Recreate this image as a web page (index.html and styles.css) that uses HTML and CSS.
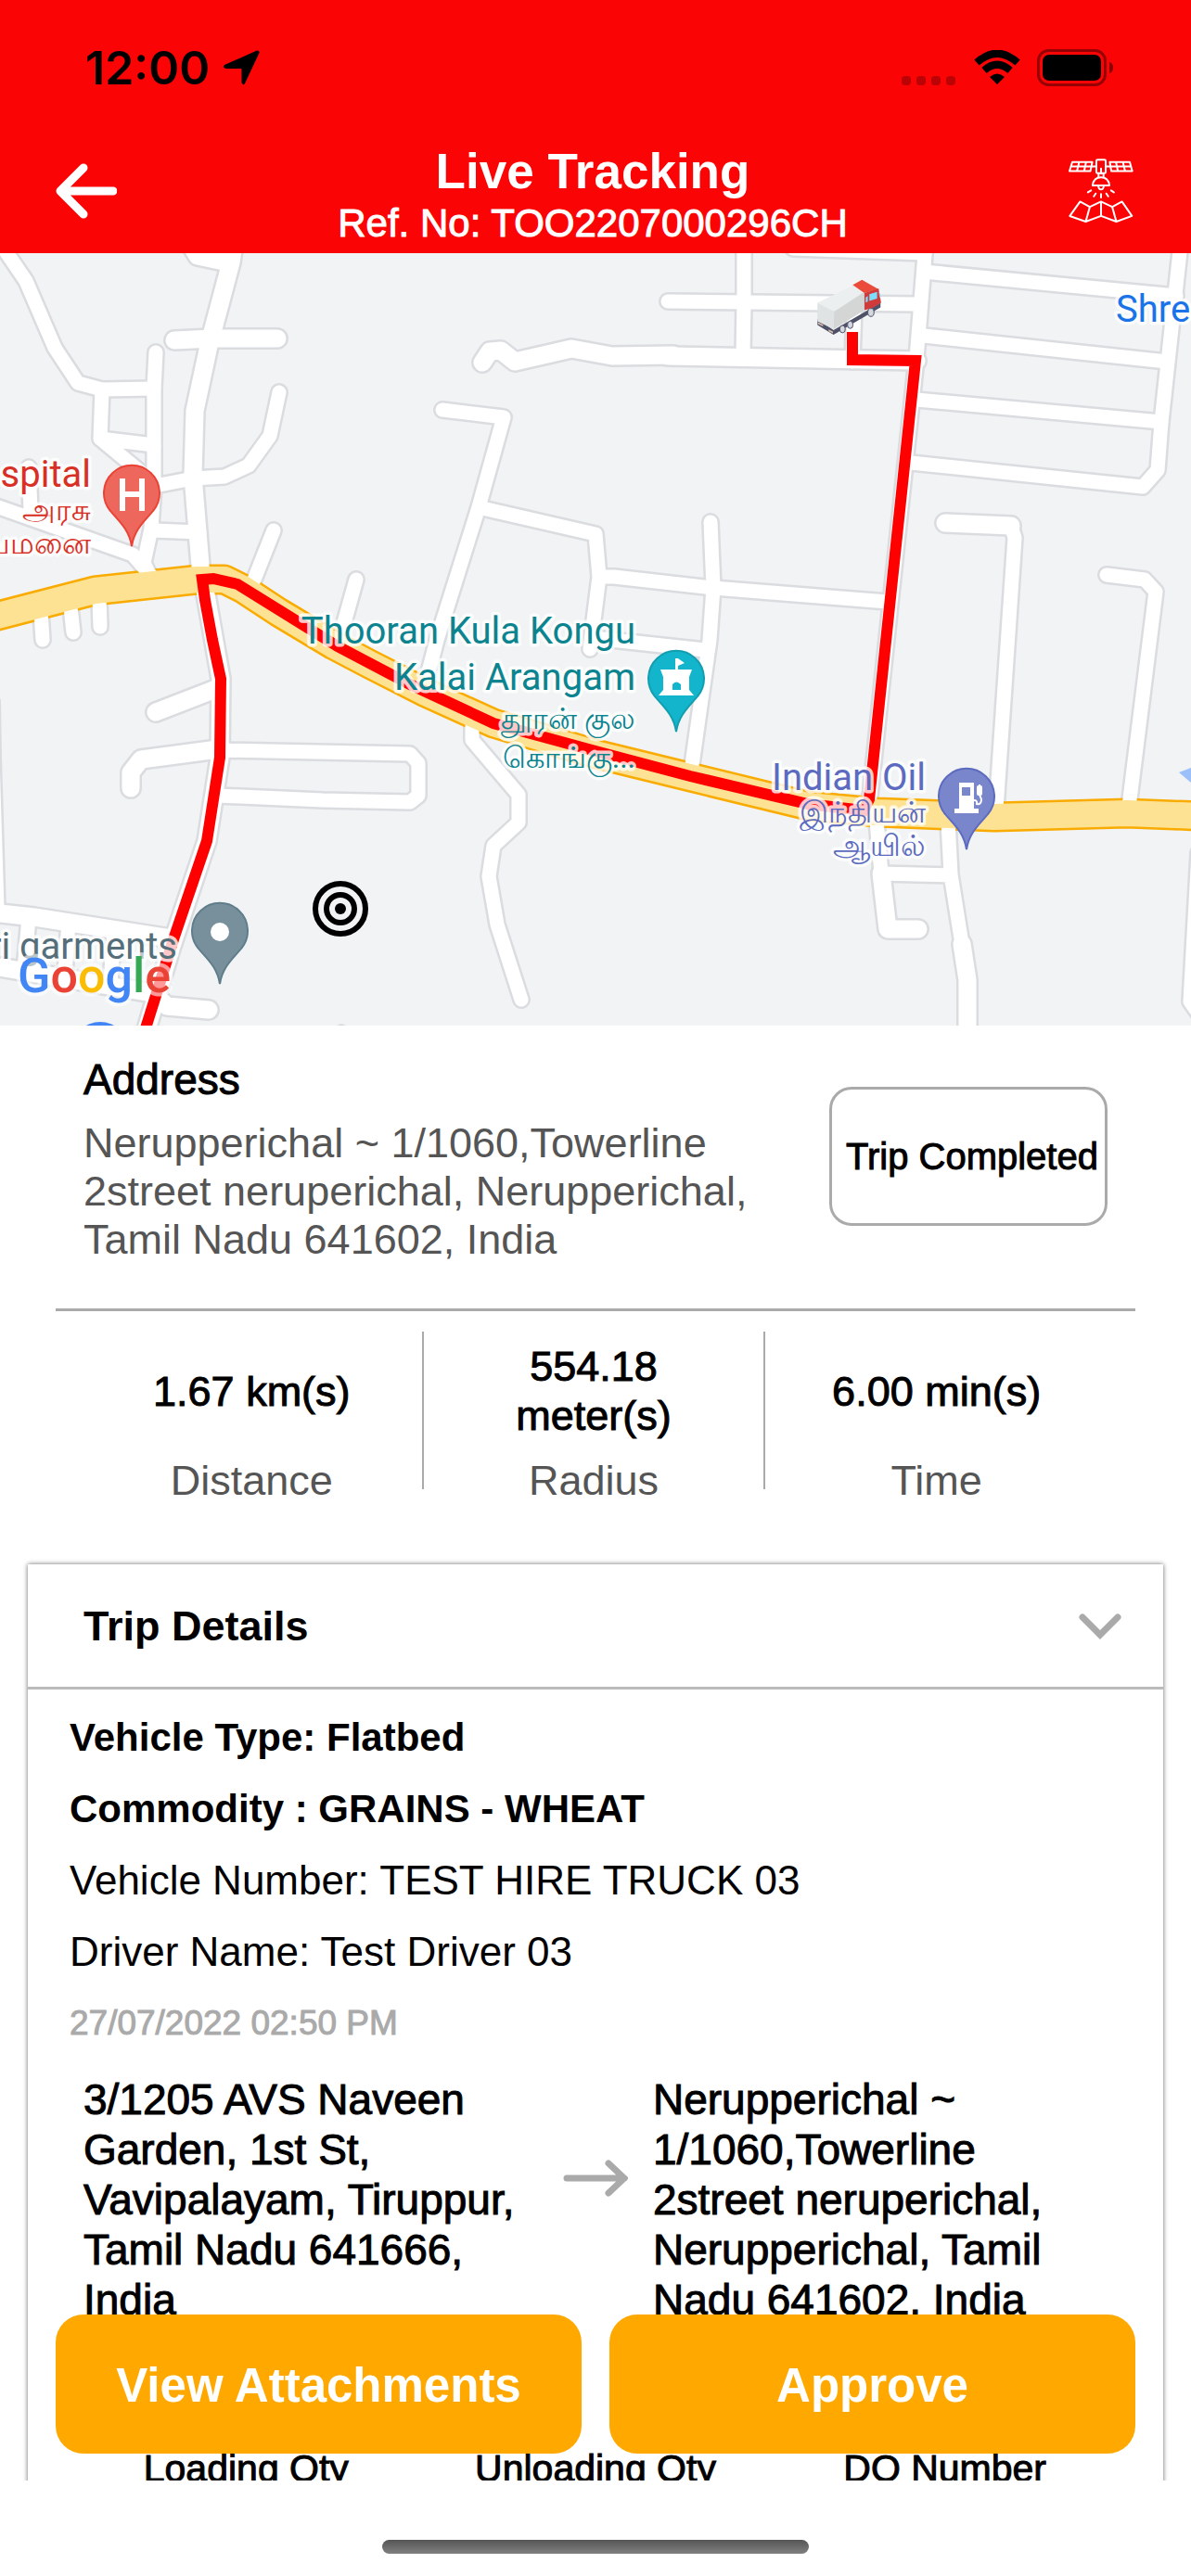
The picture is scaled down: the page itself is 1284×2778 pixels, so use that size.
FILE: index.html
```html
<!DOCTYPE html>
<html lang="en">
<head>
    <meta charset="UTF-8">
    <meta name="viewport" content="width=device-width, initial-scale=1.0">
    <title>Live Tracking</title>
    <link rel="stylesheet" href="styles.css">
</head>
<body>
<div class="app">
    <header class="header">
        <div class="status-bar">
            <div class="status-left">
                <span class="clock">12:00</span>
                <svg class="location" viewBox="0 0 40 38" width="40" height="38" aria-hidden="true">
                    <path d="M37 0.500Q40 0 39.500 3L24 36Q22 39 20.500 35V20H4Q-1 19 2 16Z"/>
                </svg>
            </div>
            <div class="status-right">
                <svg viewBox="0 0 60 38" width="60" height="38" aria-hidden="true">
                    <g opacity=".25">
                        <rect x="0" y="28" width="10" height="10" rx="4"/>
                        <rect x="16" y="28" width="10" height="10" rx="4"/>
                        <rect x="32" y="28" width="10" height="10" rx="4"/>
                        <rect x="48" y="28" width="10" height="10" rx="4"/>
                    </g>
                </svg>
                <svg viewBox="0 0 52 38" width="52" height="38" aria-hidden="true">
                    <path d="M4 13.500Q26 -6 48 13.500" fill="none" stroke="#000" stroke-width="8"/>
                    <path d="M12 22Q26 9.500 40 22" fill="none" stroke="#000" stroke-width="8"/>
                    <path d="M26 37L18 29Q26 22 34 29Z"/>
                </svg>
                <svg viewBox="0 0 84 40" width="84" height="40" aria-hidden="true">
                    <rect x="1.500" y="1.500" width="72" height="37" rx="11" fill="none" stroke="#000" stroke-width="3" opacity=".4"/>
                    <rect x="6" y="6" width="63" height="28" rx="7"/>
                    <path d="M78 14Q82 15 82 20T78 26Z" opacity=".45"/>
                </svg>
            </div>
        </div>
        <div class="nav">
            <button class="icon-button" aria-label="Back">
                <svg viewBox="0 0 66 60" width="66" height="60">
                    <path d="M30 5L5 30L30 55M6 30H62" fill="none" stroke="#fff" stroke-width="9" stroke-linecap="round" stroke-linejoin="round"/>
                </svg>
            </button>
            <div class="nav-title">
                <h1>Live Tracking</h1>
                <p>Ref. No: TOO2207000296CH</p>
            </div>
            <button class="icon-button" aria-label="Satellite view">
                <svg viewBox="96 66 208 208" width="70" height="70">
                    <g fill="none" stroke="#fff" stroke-width="6" stroke-linejoin="round" stroke-linecap="round">
                        <path d="M108 77H172L166 106H99ZM104 91H169M130 77L123 106M152 77L146 106"/>
                        <path d="M228 77H292L300 106H233ZM231 91H296M248 77L254 106M270 77L277 106"/>
                        <path d="M170 91H185M215 91H231"/>
                        <rect x="185" y="70" width="30" height="43" rx="4"/>
                        <path d="M200 98V114M192 114V124M208 114V124M173 152Q176 126 200 126T227 152ZM191 153Q192 165 200 165T209 153"/>
                        <path d="M168 168L158 174M183 178L177 187M200 180V191M217 178L223 187M232 168L241 174"/>
                        <path d="M133 204L164 221L200 204L236 221L267 204L299 250L249 268L200 250L151 268L100 250ZM164 221L151 268M200 204V250M236 221L249 268"/>
                    </g>
                </svg>
            </button>
        </div>
    </header>

    <svg class="map" viewBox="0 273 1284 833" role="img" aria-label="Route map">
        <defs>
            <!-- minor roads, drawn twice: casing first, then the white fill -->
            <g id="roads">
                <path d="M0 262L28 303L59 375L84 413L110 420L166 419"/>
                <path d="M168 380L166 419V523L163 570L155 607L162 622"/>
                <path d="M110 420L108 473L160 516M108 473L166 480"/>
                <path d="M301 423L291 470L268 502L242 514L208 516L172 523"/>
                <path d="M166 572L215 574"/>
                <path d="M295 572L272 630"/>
                <path d="M384 625L370 675"/>
                <path d="M-4 546L143 598L164 622"/>
                <path d="M31 504L33 550"/>
                <path d="M44 660L46 690M76 655L79 682M107 645L108 676"/>
                <path d="M477 442L543 450L516 547L471 690L458 740"/>
                <path d="M520 548L642 576L646 622L636 700"/>
                <path d="M647 622H662L769 634L957 649"/>
                <path d="M766 563L769 634L765 690L745 832"/>
                <path d="M640 688L760 701"/>
                <path d="M802 260V325L801 382"/>
                <path d="M720 325L988 328"/>
                <path d="M921 330L919 390"/>
                <path d="M855 268L997 273"/>
                <path d="M998 262L988 387L937 868"/>
                <path d="M996 293L1268 319M996 362L1258 390M988 431L1252 455"/>
                <path d="M982 499L1232 525L1248 507L1252 455L1273 262"/>
                <path d="M1090 567L1094 580L1074 872"/>
                <path d="M1193 620L1234 625L1246 638L1217 870"/>
                <path d="M945 885L950 942L1024 944M1022 885L1025 943L1037 1018"/>
                <path d="M1292 920L1283 1080L1300 1104"/>
                <path d="M235 809L442 813L451 823V858L442 865L348 863L235 858"/>
                <path d="M509 783V798L559 857V887L532 912L527 945L536 997L562 1078"/>
                <path d="M31 990L26 1045M74 995L70 1050M123 1003L119 1060"/>
                <path d="M-9 757L-8 817L-3 980"/>
            </g>
            <g id="wide-roads">
                <path d="M202 258L213 276L246 283"/>
                <path d="M252 262L249 283L225 373L210 443L208 513L217 622"/>
                <path d="M188 367L229 365L299 365"/>
                <path d="M520 391L528 379L540 378L555 390L616 376L660 384L726 383"/>
                <path d="M720 384L988 389"/>
                <path d="M1019 564L1090 567"/>
                <path d="M950 942L957 1002H990"/>
                <path d="M1037 1018L1043 1057V1120"/>
                <path d="M168 768L235 742M141 850V833L152 819L235 808"/>
                <path d="M220 630L238 732L237 817L223 907L184 1023L158 1110"/>
                <path d="M0 985L37 989L184 1012M0 1043L164 1071L180 1085L225 1089"/>
            </g>
            <path id="highway" d="M-10 666L102 637L213 625H242L262 635L300 660L360 696L400 717L459 747L532 780L642 813L744 838L871 869L945 876L1072 881L1215 877L1294 880"/>
            <path id="pin" d="M0 57C-3 38-15 29-23 19A30 30 0 1 1 23 19C15 29 3 38 0 57Z"/>
        </defs>

        <rect x="0" y="273" width="1284" height="833" fill="#f1f3f4"/>
        <path d="M1271 833L1284 828V844Z" fill="#9cc0f9"/>

        <g class="casing">
            <use href="#roads" stroke-width="20"/>
            <use href="#wide-roads" stroke-width="24"/>
        </g>
        <use href="#highway" class="line" stroke="#f9ab00" stroke-width="33"/>
        <g class="fill">
            <use href="#roads" stroke-width="15"/>
            <use href="#wide-roads" stroke-width="19"/>
        </g>
        <use href="#highway" class="line" stroke="#fde293" stroke-width="28"/>
        <circle cx="368" cy="1110" r="6" fill="#dadce0"/>

        <!-- travelled route -->
        <path class="route" d="M919 358V388L987 389L937 862L931 874L871 867L744 837L642 810L532 780L442 738L364 697L256 630L230 624L218 625L221 647L229 690L238 732L237 817L223 907L188 1010L156 1112"/>

        <!-- places -->
        <use href="#pin" x="142" y="532" fill="#ee675c" stroke="#ea4335" stroke-width="2"/>
        <path d="M132 516V551M153 516V551M132 533H153" stroke="#fff" stroke-width="6"/>
        <use href="#pin" x="729" y="732" fill="#12b5cb" stroke="#129eaf" stroke-width="2"/>
        <path d="M728 722V710H731L738 715L731 718V722H746L743 730V744L748 750H710L715 744V730L712 722ZM725 744H734V738Q729 733 725 738Z" fill="#fff" fill-rule="evenodd"/>
        <use href="#pin" x="1042" y="859" fill="#7986cb" stroke="#5c6bc0" stroke-width="2"/>
        <path d="M1034 844H1050V872H1055V877H1029V872H1034ZM1037 849V858H1046V849Z" fill="#fff" fill-rule="evenodd"/>
        <path d="M1050 863Q1054 863 1053 867Q1058 868 1058 862L1056 857V846" fill="none" stroke="#fff" stroke-width="2"/>
        <rect x="1053" y="847" width="6" height="11" rx="2" fill="#fff"/>
        <use href="#pin" x="237" y="1004" fill="#78909c" stroke="#607d8b" stroke-width="2"/>
        <circle cx="237" cy="1005" r="10" fill="#fff"/>
        <circle cx="108" cy="1132" r="30" fill="#4285f4"/>

        <g fill="none" stroke="#000" stroke-width="6">
            <circle cx="367" cy="980" r="27"/>
            <circle cx="367" cy="980" r="15"/>
        </g>
        <circle cx="367" cy="980" r="6"/>

        <!-- truck -->
        <g transform="translate(860 280) scale(.333)">
            <path d="M64 192L116 228L268 140V155L116 243L64 212Z" fill="#4f5168"/>
            <path d="M64 140L182 82L216 108L118 168Z" fill="#eceff0"/>
            <path d="M64 140L118 168L116 225L64 200Z" fill="#e0e3e3"/>
            <path d="M118 168L216 104V164L116 225Z" fill="#d3d6d5"/>
            <path d="M178 82L208 65L262 96L216 108Z" fill="#ea4b3a"/>
            <path d="M216 108L262 94L270 140L240 158L216 164Z" fill="#cf3a3b"/>
            <path d="M232 112L257 104V126L232 134ZM262 98L267 116L265 126ZM220 122L227 118V136L220 139Z" fill="#7edcfb"/>
            <path d="M66 203L82 211V216L66 209ZM100 226L114 233V239L100 232Z" fill="#d9b9ae"/>
            <g fill="#d5d8de" stroke="#4f5168" stroke-width="3">
                <ellipse cx="145" cy="225" rx="9" ry="12"/>
                <ellipse cx="170" cy="211" rx="9" ry="12"/>
                <ellipse cx="237" cy="171" rx="10" ry="13"/>
            </g>
        </g>

        <g class="place">
            <g text-anchor="end">
                <g fill="#d93025">
                    <text x="98" y="525">Hospital</text>
                    <text class="tamil" x="98" y="561">அரசு</text>
                    <text class="tamil" x="98" y="597">மருத்துவமனை</text>
                </g>
                <g fill="#0c8490">
                    <text x="685" y="694">Thooran Kula Kongu</text>
                    <text x="685" y="744">Kalai Arangam</text>
                    <text class="tamil" x="685" y="786">தூரன் குல</text>
                    <text class="tamil" x="685" y="828">கொங்கு...</text>
                </g>
                <g fill="#5c6bc0">
                    <text x="998" y="852">Indian Oil</text>
                    <text class="tamil" x="998" y="887">இந்தியன்</text>
                    <text class="tamil" x="998" y="923">ஆயில்</text>
                </g>
                <text x="191" y="1034" fill="#546e7a">ri garments</text>
            </g>
            <text x="1203" y="347" fill="#1a73e8">Shree</text>
        </g>
        <text class="google" x="19" y="1070"><tspan fill="#4285f4">G</tspan><tspan fill="#ea4335">o</tspan><tspan fill="#fbbc04">o</tspan><tspan fill="#4285f4">g</tspan><tspan fill="#34a853">l</tspan><tspan fill="#ea4335">e</tspan></text>
    </svg>

    <main class="details">
        <section class="address">
            <div class="address-text">
                <h2>Address</h2>
                <p>Nerupperichal ~ 1/1060,Towerline 2street neruperichal, Nerupperichal, Tamil Nadu 641602, India</p>
            </div>
            <button class="trip-status">Trip Completed</button>
        </section>

        <dl class="stats">
            <div class="stat">
                <dd>1.67 km(s)</dd>
                <dt>Distance</dt>
            </div>
            <div class="stat">
                <dd>554.18 meter(s)</dd>
                <dt>Radius</dt>
            </div>
            <div class="stat">
                <dd>6.00 min(s)</dd>
                <dt>Time</dt>
            </div>
        </dl>

        <section class="card">
            <button class="card-header" aria-expanded="true">
                <span>Trip Details</span>
                <svg viewBox="0 0 46 28" width="46" height="28" aria-hidden="true">
                    <path d="M4 4L23 23L42 4" fill="none" stroke="#aaa" stroke-width="7" stroke-linecap="round"/>
                </svg>
            </button>
            <ul class="info">
                <li class="strong">Vehicle Type: Flatbed</li>
                <li class="strong">Commodity : GRAINS - WHEAT</li>
                <li>Vehicle Number: TEST HIRE TRUCK 03</li>
                <li>Driver Name: Test Driver 03</li>
                <li class="date">27/07/2022 02:50 PM</li>
            </ul>
            <div class="trip">
                <p>3/1205 AVS Naveen Garden, 1st St, Vavipalayam, Tiruppur, Tamil Nadu 641666, India</p>
                <svg viewBox="0 0 70 40" width="70" height="40" aria-hidden="true">
                    <path d="M4 20H66M49 4L66 20L49 36" fill="none" stroke="#aaa" stroke-width="7" stroke-linecap="round"/>
                </svg>
                <p>Nerupperichal ~ 1/1060,Towerline 2street neruperichal, Nerupperichal, Tamil Nadu 641602, India</p>
            </div>
            <div class="quantities">
                <span>Loading Qty</span>
                <span>Unloading Qty</span>
                <span>DO Number</span>
            </div>
        </section>

        <div class="actions">
            <button class="action">View Attachments</button>
            <button class="action">Approve</button>
        </div>
    </main>

    <footer class="home-area">
        <div class="home-bar"></div>
    </footer>
</div>
</body>
</html>
```
FILE: styles.css
```css
* {
    box-sizing: border-box;
    margin: 0;
    padding: 0;
}

body {
    font-family: "Liberation Sans", Arial, sans-serif;
    background-color: #fff;
    color: #000;
}

button {
    font-family: inherit;
    color: inherit;
    background: none;
    border: none;
    cursor: pointer;
}

svg {
    display: block;
    flex-shrink: 0;
}

.app {
    display: flex;
    flex-direction: column;
    height: 100vh;
}

/* header */
.header {
    background-color: #fb0406;
}

.status-bar {
    display: flex;
    justify-content: space-between;
    align-items: center;
    height: 147px;
    padding: 0 82px 2px 92px;
}

.status-left,
.status-right {
    display: flex;
    align-items: center;
    gap: 17px;
}

.status-left {
    gap: 14px;
}

.clock {
    font-family: Inter, sans-serif;
    font-size: 50px;
    font-weight: 600;
}

.nav {
    display: flex;
    justify-content: space-between;
    align-items: center;
    padding: 7px 62px 7px 60px;
    color: #fff;
}

.icon-button {
    padding-bottom: 8px;
}

.nav-title {
    text-align: center;
}

.nav-title h1 {
    font-size: 53px;
    line-height: 62px;
}

.nav-title p {
    font-size: 42px;
    line-height: 50px;
    -webkit-text-stroke: 1px;
}

/* map */
.map {
    width: 100%;
    height: auto;
}

.casing,
.fill,
.line {
    fill: none;
    stroke-linecap: round;
    stroke-linejoin: round;
}

.casing {
    stroke: #dadce0;
}

.fill {
    stroke: #fff;
}

.route {
    fill: none;
    stroke: #f00;
    stroke-width: 12;
}

.place {
    font-family: Roboto, sans-serif;
    font-size: 40px;
    stroke: rgba(255, 255, 255, 0.8);
    stroke-width: 7;
    stroke-linejoin: round;
    paint-order: stroke;
}

.tamil {
    font-size: 32px;
}

.google {
    font-family: Roboto, sans-serif;
    font-size: 52px;
    font-weight: 500;
    stroke: rgba(255, 255, 255, 0.6);
    stroke-width: 8;
    stroke-linejoin: round;
    paint-order: stroke;
}

/* details */
.details {
    position: relative;
    flex: 1;
    min-height: 0;
    overflow: hidden;
}

.address {
    display: flex;
    justify-content: space-between;
    align-items: flex-start;
    margin: 0 60px;
    padding: 32px 30px 48px;
    border-bottom: 3px solid #aaa;
}

.address-text {
    max-width: 740px;
}

.address h2 {
    margin-bottom: 17px;
    font-size: 46px;
    font-weight: normal;
    line-height: 52px;
    -webkit-text-stroke: 1px;
}

.address p {
    font-size: 45px;
    line-height: 52px;
    color: #555;
}

.trip-status {
    width: 300px;
    height: 150px;
    margin-top: 34px;
    padding-left: 8px;
    border: 3px solid #aaa;
    border-radius: 24px;
    font-size: 40px;
    white-space: nowrap;
    -webkit-text-stroke: 1px;
}

.stats {
    display: grid;
    grid-template-columns: repeat(3, 1fr);
    margin: 22px 90px 81px 88px;
    text-align: center;
}

.stat {
    height: 170px;
    border-right: 2px solid #aaa;
}

.stat:last-child {
    border-right: none;
}

.stat dd {
    display: flex;
    justify-content: center;
    align-items: center;
    height: 128px;
    margin-bottom: 7px;
    padding: 0 90px;
    font-size: 45px;
    line-height: 53px;
    -webkit-text-stroke: 1px;
}

.stat:nth-child(odd) dd {
    padding: 0;
}

.stat dt {
    font-size: 45px;
    line-height: 52px;
    color: #555;
}

.card {
    margin: 0 30px;
    background-color: #fff;
    box-shadow: 0 0 5px rgba(0, 0, 0, 0.6);
}

.card-header {
    display: flex;
    justify-content: space-between;
    align-items: center;
    width: 100%;
    height: 135px;
    padding: 2px 45px 0 60px;
    border-bottom: 3px solid #bbb;
    font-size: 45px;
    font-weight: bold;
}

.info {
    padding: 13px 45px 0;
    list-style: none;
    font-size: 44px;
    line-height: 77px;
}

.info .strong {
    font-size: 42px;
    font-weight: bold;
}

.info .date {
    font-size: 37px;
    color: #aaa;
    -webkit-text-stroke: 1px;
}

.trip {
    display: grid;
    grid-template-columns: 490px 70px 1fr;
    column-gap: 27px;
    margin: 17px 60px 129px;
    font-size: 46px;
    line-height: 54px;
    -webkit-text-stroke: 1px;
}

.trip svg {
    margin-top: 92px;
}

.quantities {
    display: grid;
    grid-template-columns: repeat(3, 1fr);
    padding: 0 47px 40px;
    font-size: 41px;
    line-height: 52px;
    text-align: center;
    -webkit-text-stroke: 1px;
}

.actions {
    position: absolute;
    left: 60px;
    right: 60px;
    bottom: 29px;
    display: grid;
    grid-template-columns: 1fr 1fr;
    gap: 30px;
}

.action {
    height: 150px;
    padding-top: 2px;
    border-radius: 30px;
    background-color: #ffa800;
    color: #fff;
    font-size: 51px;
    font-weight: bold;
}

.home-area {
    display: flex;
    justify-content: center;
    height: 103px;
    padding-top: 64px;
}

.home-bar {
    width: 460px;
    height: 15px;
    border-radius: 8px;
    background: linear-gradient(#555, #808080);
}
```
